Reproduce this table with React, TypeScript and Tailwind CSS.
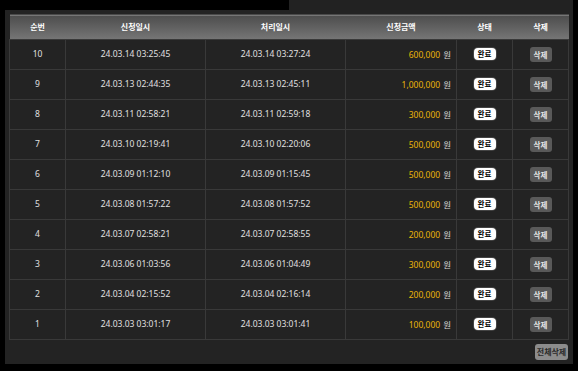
import React from "react";

type Row = {
  no: number;
  requested: string;
  processed: string;
  amount: string;
};

const rows: Row[] = [
  { no: 10, requested: "24.03.14 03:25:45", processed: "24.03.14 03:27:24", amount: "600,000" },
  { no: 9, requested: "24.03.13 02:44:35", processed: "24.03.13 02:45:11", amount: "1,000,000" },
  { no: 8, requested: "24.03.11 02:58:21", processed: "24.03.11 02:59:18", amount: "300,000" },
  { no: 7, requested: "24.03.10 02:19:41", processed: "24.03.10 02:20:06", amount: "500,000" },
  { no: 6, requested: "24.03.09 01:12:10", processed: "24.03.09 01:15:45", amount: "500,000" },
  { no: 5, requested: "24.03.08 01:57:22", processed: "24.03.08 01:57:52", amount: "500,000" },
  { no: 4, requested: "24.03.07 02:58:21", processed: "24.03.07 02:58:55", amount: "200,000" },
  { no: 3, requested: "24.03.06 01:03:56", processed: "24.03.06 01:04:49", amount: "300,000" },
  { no: 2, requested: "24.03.04 02:15:52", processed: "24.03.04 02:16:14", amount: "200,000" },
  { no: 1, requested: "24.03.03 03:01:17", processed: "24.03.03 03:01:41", amount: "100,000" },
];

const headers = ["순번", "신청일시", "처리일시", "신청금액", "상태", "삭제"];

const kr = { fontFamily: '"Noto Sans CJK KR", sans-serif' };

const App: React.FC = () => {
  return (
    <div
      className="w-[578px] h-[371px] bg-black overflow-hidden"
      style={{ fontFamily: '"Noto Sans", "Noto Sans CJK KR", sans-serif' }}
    >
      {/* strip of the panel above */}
      <div className="flex h-[10px]">
        <div className="w-[289px]" />
        <div className="w-[284px] bg-[#222222]" />
      </div>

      {/* history panel */}
      <div className="ml-[5px] w-[568px] h-[354px] bg-[#232323] pt-[4px] pl-[4px] pr-[5px] flex flex-col">
        <table className="w-[559px] table-fixed border-collapse text-[8.5px] text-[#e0e0e0]">
          <colgroup>
            <col className="w-[56px]" />
            <col className="w-[140px]" />
            <col className="w-[140px]" />
            <col className="w-[111px]" />
            <col className="w-[56px]" />
            <col className="w-[56px]" />
          </colgroup>
          <thead>
            <tr className="h-[25px] border-t border-[#4a4a4a] bg-gradient-to-b from-[#4e4e4e] to-[#777777]">
              {headers.map((h) => (
                <th key={h} className="text-center font-semibold text-[8px] text-white" style={kr}>
                  {h}
                </th>
              ))}
            </tr>
          </thead>
          <tbody>
            {rows.map((r) => (
              <tr key={r.no} className="h-[30px]">
                <td className="border border-[#393939] text-center">{r.no}</td>
                <td className="border border-[#393939] text-center">{r.requested}</td>
                <td className="border border-[#393939] text-center">{r.processed}</td>
                <td className="border border-[#393939] text-right pr-[5px]">
                  <span className="text-[#eab308]">{r.amount}</span>
                  <span className="ml-[3px] text-[#d8d8d8]" style={kr}>
                    원
                  </span>
                </td>
                <td className="border border-[#393939] text-center">
                  <span
                    className="inline-flex items-center justify-center w-[22px] h-[12px] rounded-[4px] bg-white text-black text-[7.5px] font-semibold leading-none ring-1 ring-[#444]"
                    style={kr}
                  >
                    완료
                  </span>
                </td>
                <td className="border border-[#393939] text-center">
                  <span
                    className="inline-flex items-center justify-center w-[22px] h-[15px] rounded-[3px] bg-[#595959] text-[#e6e6e6] text-[7.5px] font-semibold leading-none"
                    style={kr}
                  >
                    삭제
                  </span>
                </td>
              </tr>
            ))}
          </tbody>
        </table>

        <div className="flex justify-end mt-[4px]">
          <button
            className="w-[33px] h-[16px] rounded-[3px] bg-[#8c8c8c] text-[#2a2a2a] text-[8px] font-semibold leading-none"
            style={kr}
          >
            전체삭제
          </button>
        </div>
      </div>
    </div>
  );
};

export default App;
